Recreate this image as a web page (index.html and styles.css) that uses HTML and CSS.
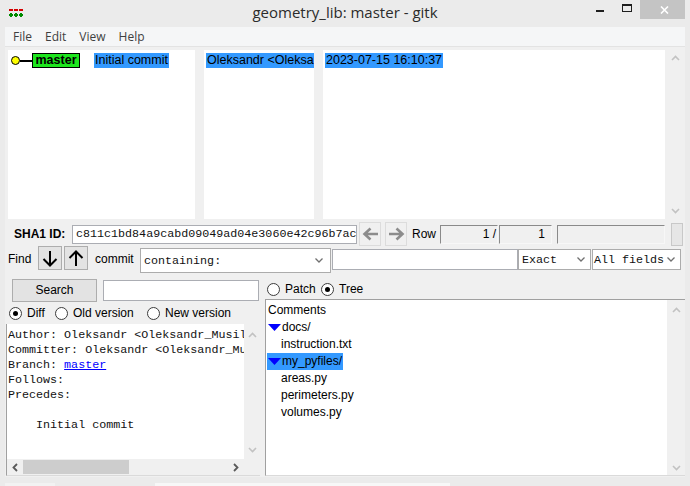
FILE: index.html
```html
<!DOCTYPE html>
<html>
<head>
<meta charset="utf-8">
<title>gitk</title>
<link rel="stylesheet" href="styles.css">
</head>
<body>
<div class="titlebar">
  <div class="tb-left">
    <svg class="appicon" width="14" height="8" viewBox="0 0 14 8">
      <rect x="0" y="0" width="4" height="2" fill="#d40000"/>
      <rect x="5" y="0" width="4" height="2" fill="#d40000"/>
      <rect x="10" y="0" width="4" height="2" fill="#d40000"/>
      <rect x="0" y="5" width="4" height="2" fill="#008a00"/>
      <rect x="1" y="4" width="2" height="4" fill="#008a00"/>
      <rect x="5" y="5" width="4" height="2" fill="#008a00"/>
      <rect x="6" y="4" width="2" height="4" fill="#008a00"/>
      <rect x="10" y="5" width="4" height="2" fill="#008a00"/>
      <rect x="11" y="4" width="2" height="4" fill="#008a00"/>
    </svg>
  </div>
  <div class="title">geometry_lib: master - gitk</div>
  <div class="controls">
    <span class="ctl-min"></span>
    <span class="ctl-max"></span>
    <span class="ctl-close">
      <svg width="9" height="8" viewBox="0 0 9 8"><path d="M1 0.5L8 7.5M8 0.5L1 7.5" stroke="#fff" stroke-width="1.6" fill="none"/></svg>
    </span>
  </div>
</div>

<div class="window">
  <div class="menubar">
    <span>File</span><span>Edit</span><span>View</span><span>Help</span>
  </div>

  <div class="toppanes">
    <div class="pane p1">
      <div class="row1">
        <span class="node"></span><span class="edge"></span><span class="tag">master</span><span class="sel msg">Initial commit</span>
      </div>
    </div>
    <div class="pane p2">
      <div class="row1"><span class="sel">Oleksandr &lt;Oleksandr_Musil@example.com&gt;</span></div>
    </div>
    <div class="pane p3">
      <div class="row1"><span class="sel">2023-07-15 16:10:37</span></div>
    </div>
    <div class="vscroll top-vs">
      <svg class="chev" width="9" height="6" viewBox="0 0 9 6"><path d="M1 5L4.5 1.5L8 5" stroke="#c2c2c2" stroke-width="1.6" fill="none"/></svg>
      <svg class="chev" width="9" height="6" viewBox="0 0 9 6"><path d="M1 1L4.5 4.5L8 1" stroke="#c2c2c2" stroke-width="1.6" fill="none"/></svg>
    </div>
  </div>

  <div class="sharow">
    <span class="lbl-sha">SHA1 ID:</span>
    <div class="sha">c811c1bd84a9cabd09049ad04e3060e42c96b7ac</div>
    <span class="navbtn nb1">
      <svg width="17" height="14" viewBox="0 0 17 14"><path d="M16 7H3M8.5 1.5L2.5 7L8.5 12.5" stroke="#8c8c8c" stroke-width="2.6" fill="none"/></svg>
    </span>
    <span class="navbtn nb2">
      <svg width="17" height="14" viewBox="0 0 17 14"><path d="M1 7H14M8.5 1.5L14.5 7L8.5 12.5" stroke="#8c8c8c" stroke-width="2.6" fill="none"/></svg>
    </span>
    <span class="lbl-row">Row</span>
    <span class="sunk f1">1 /</span>
    <span class="sunk f2">1</span>
    <span class="sunk f3"></span>
    <span class="pbox"></span>
  </div>

  <div class="findrow">
    <span class="lbl-find">Find</span>
    <span class="abtn">
      <svg width="16" height="17" viewBox="0 0 16 17"><path d="M8 1V15.5M1.5 9L8 15.5L14.5 9" stroke="#000" stroke-width="2" fill="none"/></svg>
    </span>
    <span class="abtn ab2">
      <svg width="16" height="17" viewBox="0 0 16 17"><path d="M8 16V1.5M1.5 8L8 1.5L14.5 8" stroke="#000" stroke-width="2" fill="none"/></svg>
    </span>
    <span class="lbl-commit">commit</span>
    <div class="combo cb-type"><span class="ctext">containing:</span><svg class="dd" width="8" height="5" viewBox="0 0 8 5"><path d="M0.5 0.5L4 4L7.5 0.5" stroke="#707070" stroke-width="1.3" fill="none"/></svg></div>
    <div class="entry fentry"></div>
    <div class="combo cb-exact"><span class="ctext">Exact</span><svg class="dd" width="8" height="5" viewBox="0 0 8 5"><path d="M0.5 0.5L4 4L7.5 0.5" stroke="#707070" stroke-width="1.3" fill="none"/></svg></div>
    <div class="combo cb-fields"><span class="ctext">All fields</span><svg class="dd" width="8" height="5" viewBox="0 0 8 5"><path d="M0.5 0.5L4 4L7.5 0.5" stroke="#707070" stroke-width="1.3" fill="none"/></svg></div>
  </div>

  <div class="lower">
    <div class="lcol">
      <div class="searchrow">
        <span class="btn-search">Search</span>
        <div class="entry sentry"></div>
      </div>
      <div class="diffrow">
        <label class="opt o-diff"><span class="radio on"></span>Diff</label>
        <label class="opt o-old"><span class="radio"></span>Old version</label>
        <label class="opt"><span class="radio"></span>New version</label>
      </div>
      <div class="lpane">
        <div class="ctext-area">Author: Oleksandr &lt;Oleksandr_Musil@example.com&gt;  2023-07-15 16:10:37
Committer: Oleksandr &lt;Oleksandr_Musil@example.com&gt;  2023-07-15 16:10:37
Branch: <span class="link">master</span>
Follows:
Precedes:

    Initial commit</div>
        <div class="vs-small">
          <svg width="9" height="6" viewBox="0 0 9 6"><path d="M1 5L4.5 1.5L8 5" stroke="#c2c2c2" stroke-width="1.6" fill="none"/></svg>
          <svg width="9" height="6" viewBox="0 0 9 6"><path d="M1 1L4.5 4.5L8 1" stroke="#c2c2c2" stroke-width="1.6" fill="none"/></svg>
        </div>
        <div class="hscroll">
          <span class="harrow"><svg width="6" height="9" viewBox="0 0 6 9"><path d="M5 1L1.5 4.5L5 8" stroke="#5a5a5a" stroke-width="1.8" fill="none"/></svg></span>
          <span class="thumb"></span>
          <span class="hspace"></span>
          <span class="harrow"><svg width="6" height="9" viewBox="0 0 6 9"><path d="M1 1L4.5 4.5L1 8" stroke="#5a5a5a" stroke-width="1.8" fill="none"/></svg></span>
        </div>
        <div class="corner"></div>
      </div>
    </div>

    <div class="rcol">
      <div class="prow">
        <label class="opt o-patch"><span class="radio"></span>Patch</label>
        <label class="opt"><span class="radio on"></span>Tree</label>
      </div>
      <div class="tpane">
        <div class="tree">
          <div class="titem">Comments</div>
          <div class="titem"><svg class="tri" width="13" height="7" viewBox="0 0 13 7"><polygon points="0,0 13,0 6.5,7" fill="#0000ff"/></svg>docs/</div>
          <div class="titem sub">instruction.txt</div>
          <div class="titem hl-row"><span class="sel tsel"><svg class="tri" width="13" height="7" viewBox="0 0 13 7"><polygon points="0,0 13,0 6.5,7" fill="#0000ff"/></svg>my_pyfiles/</span></div>
          <div class="titem sub">areas.py</div>
          <div class="titem sub">perimeters.py</div>
          <div class="titem sub">volumes.py</div>
        </div>
        <div class="vs-tree">
          <svg width="9" height="6" viewBox="0 0 9 6"><path d="M1 5L4.5 1.5L8 5" stroke="#c2c2c2" stroke-width="1.6" fill="none"/></svg>
          <svg width="9" height="6" viewBox="0 0 9 6"><path d="M1 1L4.5 4.5L8 1" stroke="#c2c2c2" stroke-width="1.6" fill="none"/></svg>
        </div>
      </div>
    </div>
  </div>
</div>
<div class="bottomstrip"><span class="bs1"></span><span class="bs2"></span></div>
</body>
</html>
```

FILE: styles.css
```css
* { box-sizing: border-box; margin: 0; padding: 0; }
html, body { width: 690px; height: 486px; overflow: hidden; }
body {
  background: #ebebeb;
  font-family: "Liberation Sans", Arial, sans-serif;
  font-size: 12px;
  color: #000;
}

/* title bar */
.titlebar {
  height: 27px;
  display: grid;
  grid-template-columns: 1fr auto 1fr;
  align-items: start;
}
.appicon { display: block; margin: 9px 0 0 9px; }
.title {
  font-family: "Open Sans", "Noto Sans", sans-serif;
  font-size: 15px;
  line-height: 20px;
  color: #2b2b2b;
  padding-top: 2px;
  white-space: nowrap;
}
.controls { justify-self: end; display: flex; align-items: flex-start; margin-right: 5px; }
.ctl-min { width: 8px; height: 2px; background: #1e1e1e; margin-top: 10px; }
.ctl-max { width: 10px; height: 8px; border: 1px solid #1e1e1e; border-top-width: 2px; margin: 4px 0 0 18px; }
.ctl-close {
  width: 45px; height: 19px; background: #c4c4c4; margin-left: 8px;
  display: flex; align-items: center; justify-content: center; padding-left: 3px;
}
.ctl-close svg { display: block; }

/* window */
.window {
  margin-left: 5px;
  width: 680px;
  height: 450px;
  background: #f0f0f0;
  display: flex;
  flex-direction: column;
}
.menubar {
  height: 20px;
  background: #f5f6f7;
  border-bottom: 1px solid #e3e3e3;
  display: flex;
  gap: 13px;
  padding-left: 8px;
  font-family: "Open Sans", "Noto Sans", sans-serif;
  font-size: 12px;
  line-height: 19px;
  color: #3f3f3f;
}

/* top panes */
.toppanes { display: flex; height: 169px; margin-top: 3px; padding-left: 3px; }
.pane { background: #fff; overflow: hidden; padding-top: 3px; font-size: 12.5px; }
.p1 { width: 187px; }
.p2 { width: 110px; margin-left: 9px; padding-left: 2px; }
.p3 { width: 342px; margin-left: 9px; padding-left: 2px; }
.row1 { height: 15px; display: flex; align-items: center; white-space: nowrap; }
.sel { background: #3399ff; line-height: 15px; height: 15px; padding: 0 1px; white-space: nowrap; }
.node {
  width: 9px; height: 9px; border-radius: 50%;
  background: #ffff00; border: 1px solid #000; margin-left: 3px; flex: none;
}
.edge { width: 12px; height: 2px; background: #000; flex: none; }
.tag {
  width: 48px; height: 15px; border: 1px solid #000; background: #1ee61e;
  font-weight: bold; text-align: center; line-height: 13px; flex: none;
}
.msg { margin-left: 14px; }
.vscroll {
  width: 19px; margin-left: 1px;
  display: flex; flex-direction: column; align-items: center; justify-content: space-between;
  padding: 5px 0 5px 0;
}
.chev { display: block; }

/* sha row */
.sharow { display: flex; align-items: center; height: 24px; margin-top: 3px; }
.lbl-sha { font-weight: bold; margin-left: 9px; width: 58px; }
.sha {
  width: 285px; height: 19px; background: #fff; border: 1px solid #abadb3;
  font-family: "Liberation Mono", "Courier New", monospace; font-size: 11.7px;
  line-height: 17px; padding-left: 3px; overflow: hidden; white-space: nowrap; color: #111;
}
.navbtn {
  width: 22px; height: 24px; background: #f0f0f0; border: 1px solid #dcdcdc;
  display: flex; align-items: center; justify-content: center;
}
.navbtn svg { display: block; }
.nb1 { margin-left: 2px; }
.nb2 { margin-left: 4px; }
.lbl-row { margin-left: 5px; width: 28px; }
.sunk {
  height: 19px; border: 1px solid; border-color: #8a8a8a #f7f7f7 #f7f7f7 #8a8a8a;
  text-align: right; line-height: 17px; white-space: pre;
}
.f1 { width: 58px; padding-right: 1px; }
.f2 { width: 53px; margin-left: 1px; padding-right: 6px; }
.f3 { width: 108px; margin-left: 5px; }
.pbox { width: 12px; height: 23px; margin-left: 6px; background: #e6e6e6; border: 1px solid #c8c8c8; }

/* find row */
.findrow { display: flex; align-items: flex-start; height: 27px; }
.lbl-find { margin-left: 3px; width: 30px; line-height: 26px; }
.abtn {
  width: 24px; height: 24px; background: #e3e3e3; border: 1px solid #adadad;
  display: flex; align-items: center; justify-content: center;
}
.abtn svg { display: block; }
.ab2 { margin-left: 2px; }
.lbl-commit { margin-left: 7px; width: 45px; line-height: 26px; }
.combo {
  display: flex; align-items: center; background: #fff; border: 1px solid #acacac;
  font-family: "Liberation Mono", "Courier New", monospace; font-size: 11.7px; color: #111;
  white-space: nowrap; overflow: hidden;
}
.ctext { flex: 1; padding-left: 3px; }
.dd { display: block; margin-right: 5px; flex: none; }
.cb-type { width: 191px; height: 25px; margin-top: 2px; }
.cb-type .dd { margin-right: 7px; }
.entry { background: #fff; border: 1px solid #abadb3; }
.fentry { width: 186px; height: 21px; margin-top: 3px; margin-left: 1px; }
.cb-exact { width: 73px; height: 21px; margin-top: 3px; }
.cb-fields { width: 89px; height: 21px; margin-top: 3px; margin-left: 1px; }
.cb-fields .ctext { padding-left: 1px; }

/* lower */
.lower { display: flex; margin-top: 6px; }
.lcol { width: 256px; }
.rcol { width: 420px; margin-left: 4px; }
.searchrow { display: flex; height: 23px; }
.btn-search {
  margin-left: 7px; width: 85px; height: 23px; background: #e3e3e3; border: 1px solid #adadad;
  text-align: center; line-height: 21px;
}
.sentry { width: 156px; height: 21px; margin-left: 6px; margin-top: 1px; }
.diffrow { display: flex; align-items: center; height: 16px; margin-top: 3px; padding-left: 4px; }
.opt { display: flex; align-items: center; gap: 5px; white-space: nowrap; }
.o-diff { width: 46px; }
.o-old { width: 92px; }
.radio {
  width: 13px; height: 13px; border: 1px solid #3c3c3c; border-radius: 50%; background: #fff;
  display: flex; align-items: center; justify-content: center; flex: none;
}
.radio.on::after { content: ""; width: 5px; height: 5px; border-radius: 50%; background: #000; }

.lpane {
  margin-top: 3px; margin-left: 1px; width: 254px; height: 152px;
  border-left: 1px solid #a0a0a0; border-bottom: 1px solid #dadada;
  display: grid; grid-template-columns: 237px 16px; grid-template-rows: 135px 16px;
}
.ctext-area {
  background: #fff; overflow: hidden; white-space: pre; color: #111;
  font-family: "Liberation Mono", "Courier New", monospace; font-size: 11.7px;
  line-height: 15px; padding: 4px 0 0 1px;
}
.link { color: #0000ff; text-decoration: underline; }
.vs-small {
  display: flex; flex-direction: column; align-items: center; justify-content: space-between;
  padding: 8px 0 6px 1px;
}
.vs-small svg { display: block; }
.hscroll { display: flex; align-items: center; }
.harrow { width: 16px; display: flex; justify-content: center; }
.harrow svg { display: block; }
.thumb { width: 106px; height: 14px; background: #cdcdcd; }
.hspace { flex: 1; }
.corner { background: #f0f0f0; }

.prow { display: flex; align-items: center; height: 20px; padding-left: 2px; }
.o-patch { width: 54px; }
.tpane {
  height: 177px; display: flex;
  border-left: 1px solid #a0a0a0; border-top: 1px solid #a0a0a0; border-bottom: 1px solid #dadada;
}
.tree { width: 401px; background: #fff; padding-top: 2px; }
.titem { height: 17px; line-height: 17px; display: flex; align-items: center; padding-left: 2px; white-space: nowrap; }
.titem.sub { padding-left: 15px; }
.titem.hl-row { padding-left: 1px; }
.tri { display: block; margin-right: 1px; flex: none; }
.tsel { display: flex; align-items: center; height: 17px; line-height: 17px; padding: 0 1px 0 1px; }
.vs-tree {
  flex: 1; display: flex; flex-direction: column; align-items: center; justify-content: space-between;
  padding: 7px 0 4px 0;
}
.vs-tree svg { display: block; }

.bottomstrip { display: flex; margin-top: 6px; height: 3px; }
.bs1 { width: 50px; margin-left: 5px; background: #f2f2f2; }
.bs2 { width: 295px; margin-left: 100px; background: #f7f7f7; }
```
